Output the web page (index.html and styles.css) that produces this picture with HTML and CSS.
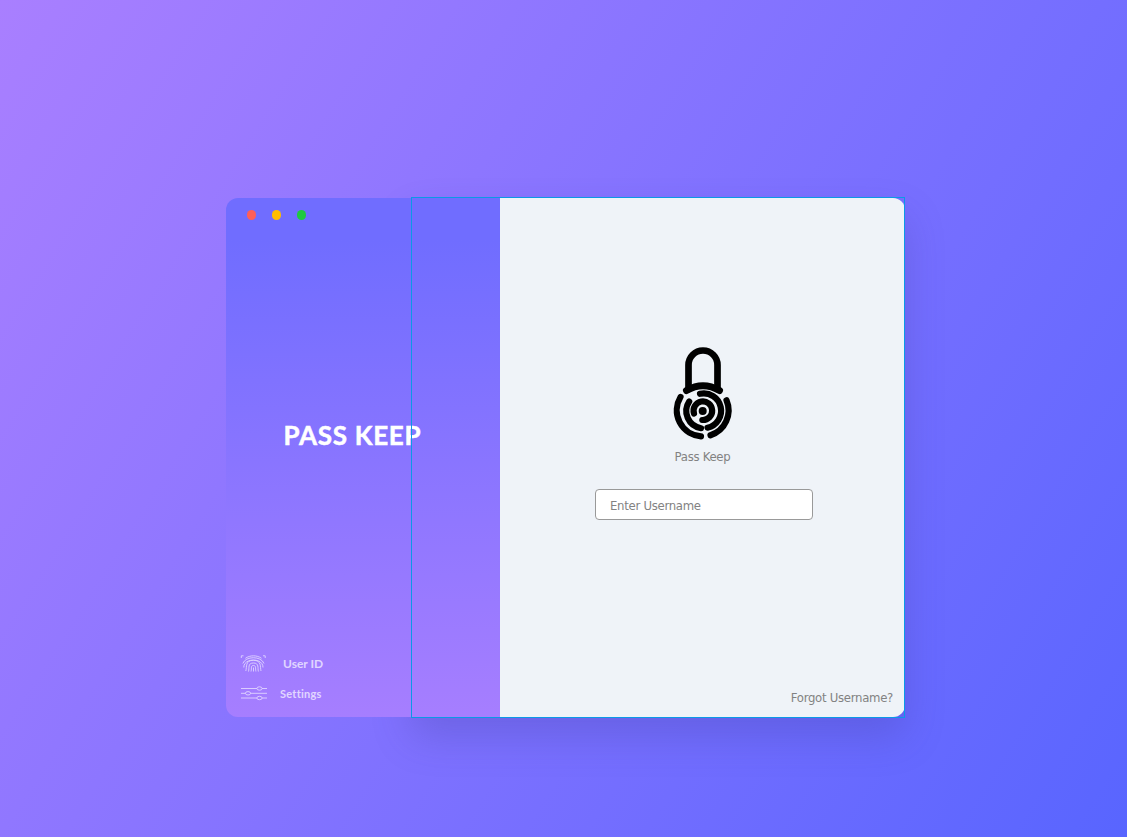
FILE: index.html
```html
<!DOCTYPE html>
<html lang="en">
<head>
<meta charset="utf-8">
<title>Pass Keep</title>
<link rel="stylesheet" href="styles.css">
</head>
<body>
<main class="window">
  <aside class="sidebar">
    <div class="controls"><span class="dot close"></span><span class="dot minimize"></span><span class="dot expand"></span></div>
    <h1 class="brand">PASS KEEP</h1>
    <nav class="menu">
      <a class="item user">
        <svg class="icon" width="28" height="20" viewBox="0 0 28 20">
          <path d="M1.300 4V1.800H3.500M23 1.800H25.200V4M5.400 4.300C10 1 17 1 21.500 4.300M2.800 9.500C5.500 1.800 21.300 1.800 24 9.500M3.800 13.500C3.500 3.500 23.300 3.500 23 13.500M5.800 17C7 13 5 6.300 13.400 6.300S20 13 21 17M8.500 17.500C9.500 14 7.500 9 13.400 9S17.500 14 18.400 17.500M11 17.500C12 14 10.500 11.500 13.400 11.500S15.200 14 15.900 17.500M13.500 13.500V17.500"/>
        </svg>
        <span>User ID</span>
      </a>
      <a class="item settings">
        <svg class="icon" width="28" height="16" viewBox="0 0 28 16">
          <path d="M1 3.500H17M22 3.500H27M1 8.300H5.500M10.500 8.300H27M1 13H17M22 13H27"/>
          <ellipse cx="19.500" cy="3.500" rx="2.600" ry="1.700"/><ellipse cx="8" cy="8.300" rx="2.600" ry="1.700"/><ellipse cx="19.500" cy="13" rx="2.600" ry="1.700"/>
        </svg>
        <span>Settings</span>
      </a>
    </nav>
  </aside>
  <section class="login">
    <svg class="lock" width="60" height="94" viewBox="0 0 60 94">
      <path class="shackle" d="M15.500 42V18A14.500 14.500 0 0 1 44.500 18V42"/>
      <path class="collar" d="M13.500 43.500Q30 34 46.500 43.500"/>
      <path class="ring" d="M7.500 50A26 26 0 0 0 28 89.300M53.500 53.300A26 26 0 0 1 37.500 88.200M16.200 54.500A17.300 17.300 0 0 0 28 81.200M27 46.800A17.300 17.300 0 0 1 34.500 80.700M21 66.500A9.300 9.300 0 1 1 29.300 73"/>
      <circle cx="29.700" cy="64" r="4"/>
    </svg>
    <p class="caption">Pass Keep</p>
    <input class="field" type="text" placeholder="Enter Username">
    <a class="forgot">Forgot Username?</a>
  </section>
  <div class="frame"></div>
</main>
</body>
</html>
```
FILE: styles.css
```css
* { box-sizing: border-box; }
body {
  margin: 0;
  height: 837px;
  overflow: hidden;
  padding: 198px 0 0 226px;
  background: linear-gradient(122deg, #a97fff 0%, #746eff 67%, #5865ff 100%);
  font-family: "Noto Sans", sans-serif;
}
.window {
  position: relative;
  z-index: 0;
  display: flex;
  width: 679px;
  height: 519px;
  border-radius: 12px;
}
.window::before {
  content: "";
  position: absolute;
  z-index: -1;
  inset: 0 0 0 185px;
  border-radius: 12px;
  box-shadow: 0 20px 38px rgba(65, 60, 150, .25);
}
.sidebar {
  display: flex;
  flex-direction: column;
  width: 274px;
  border-radius: 12px 0 0 12px;
  background: linear-gradient(#706dff 8%, #a67eff);
  color: #fff;
}
.controls { display: flex; gap: 15.500px; padding: 12px 0 0 20.500px; }
.dot { width: 9.500px; height: 9.500px; border-radius: 50%; }
.close { background: #ff5f57; }
.minimize { background: #ffbd00; }
.expand { background: #1fc840; }
.brand {
  margin: 199px 0 0 57.500px;
  font: 700 26px/32px Lato, sans-serif;
  letter-spacing: .7px;
  -webkit-text-stroke: .5px #fff;
  white-space: nowrap;
}
.menu { margin-top: auto; padding: 0 0 14px 14px; opacity: .68; font-family: Lato, sans-serif; font-weight: 700; }
.item { display: flex; align-items: center; }
.user { height: 29px; gap: 15px; font-size: 12px; }
.settings { height: 20px; margin-top: 5px; gap: 12px; font-size: 11px; letter-spacing: .25px; font-variant-ligatures: none; }
.icon { flex: none; fill: none; stroke: #fff; stroke-width: .9; }
.login {
  display: flex;
  flex-direction: column;
  align-items: center;
  width: 405px;
  padding-top: 149px;
  border-radius: 0 12px 12px 0;
  background: #eff3f8;
  color: #828282;
  font: 13px "DejaVu Sans Condensed", "DejaVu Sans", sans-serif;
  font-stretch: condensed;
  letter-spacing: -.28px;
}
.lock { fill: #000; overflow: visible; }
.lock path { fill: none; stroke: #000; stroke-linecap: round; }
.lock .shackle { stroke-width: 6.700; }
.lock .collar { stroke-width: 7; }
.lock .ring { stroke-width: 6.200; }
.caption { margin: 6px 0 0; line-height: 20px; }
.field {
  width: 218px;
  height: 31px;
  margin: 22px 0 0 2px;
  padding: 1px 14.500px 0;
  border: 1px solid #999;
  border-radius: 4px;
  background: #fff;
  font: inherit;
  letter-spacing: inherit;
}
.field::placeholder { color: #828282; }
.forgot { margin: auto 12px 9px auto; line-height: 20px; }
.frame {
  position: absolute;
  left: 185px;
  top: -1px;
  width: 494px;
  height: 521px;
  border: 1px solid #0b99e6;
}
```
